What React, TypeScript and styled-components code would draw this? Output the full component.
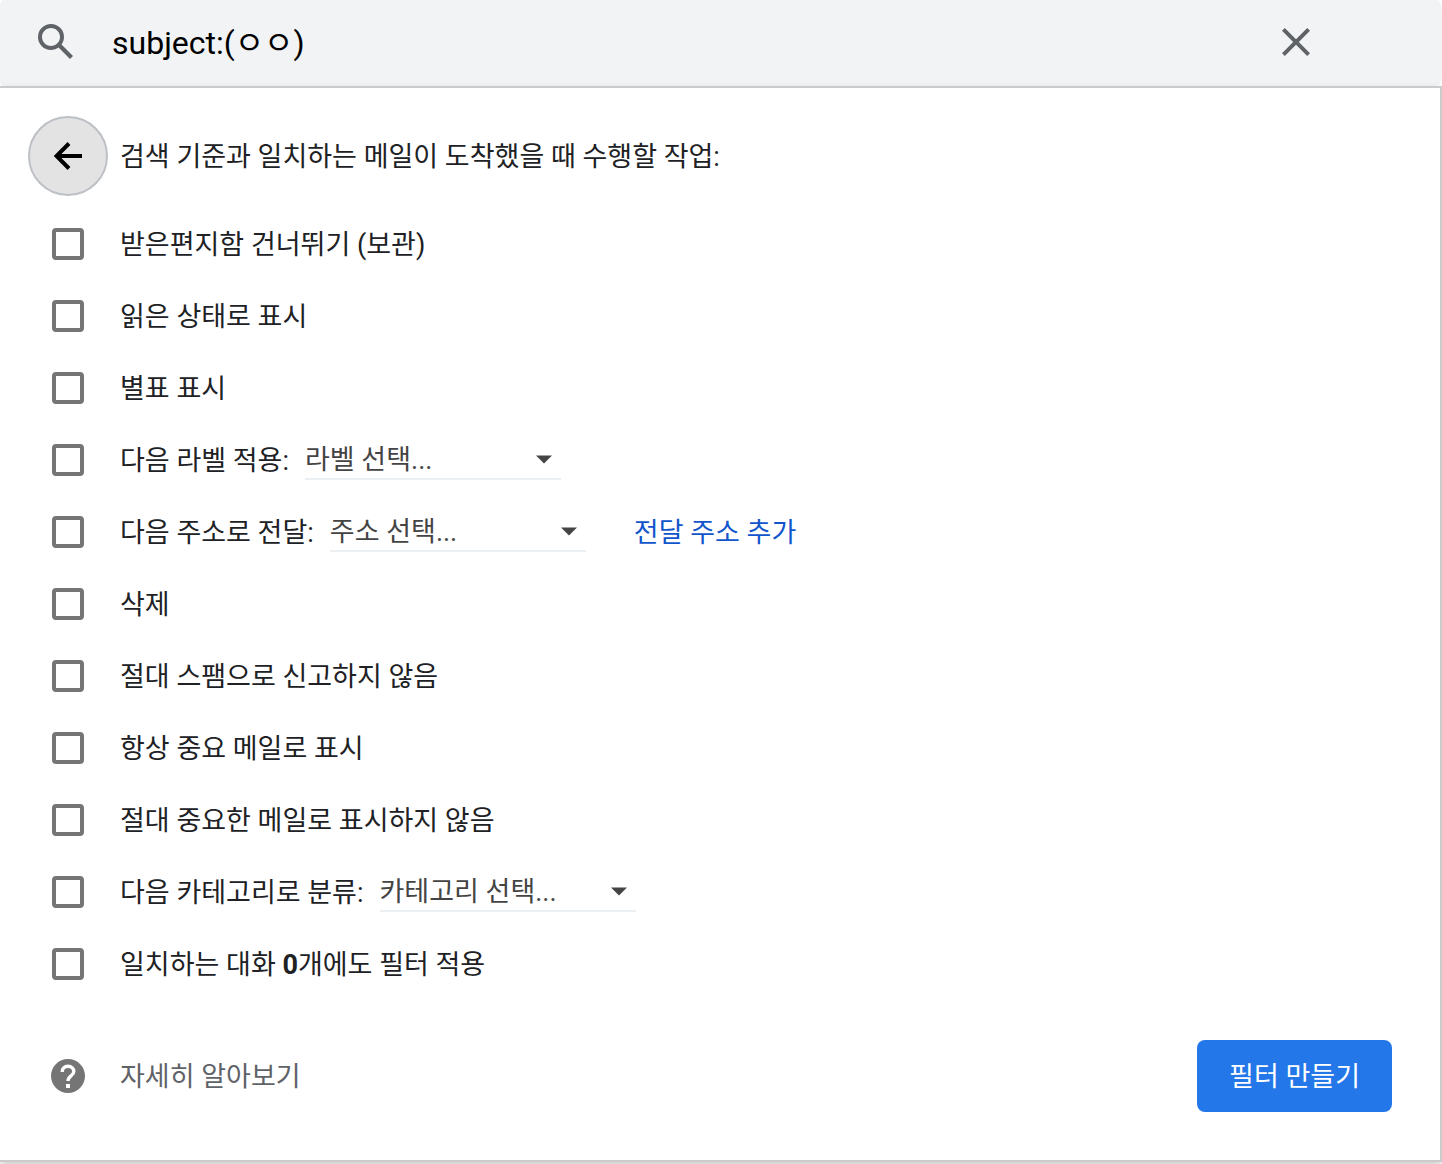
import React, { useState } from "react";
import styled, { createGlobalStyle } from "styled-components";

const GlobalStyle = createGlobalStyle`
  *, *::before, *::after { box-sizing: border-box; }
  body {
    margin: 0;
    background: #fff;
    color: #202124;
    font-family: Roboto, "Noto Sans CJK KR", sans-serif;
    font-size: 27px;
    line-height: 36px;
  }
  button, input, select { font: inherit; color: inherit; }
`;

const Page = styled.main`
  display: flex;
  flex-direction: column;
  min-height: 100vh;
  overflow: hidden;
`;

const SearchBar = styled.form`
  display: flex;
  align-items: center;
  height: 86px;
  padding: 0 122px 2px 32px;
  background: #f1f3f4;
  border-radius: 3px 5px 5px 3px / 6px 12px 12px 6px;
`;

const IconButton = styled.button`
  display: grid;
  place-items: center;
  flex: none;
  width: 48px;
  height: 48px;
  padding: 0;
  border: 0;
  background: none;
  color: #5f6368;
  cursor: pointer;
`;

const SearchInput = styled.input`
  flex: 1;
  min-width: 0;
  height: 48px;
  margin: 0 32px;
  padding: 0 0 4px;
  border: 0;
  outline: 0;
  background: none;
  color: #000;
  font-size: 32px;
`;

const Panel = styled.section`
  display: flex;
  flex: 1;
  flex-direction: column;
  padding: 28px 48px 48px 28px;
  margin-bottom: 2px;
  border: solid #cbcbcb;
  border-width: 2px 2px 2px 0;
  background: #fff;
  box-shadow: 0 4px 8px rgba(0, 0, 0, 0.2);
`;

const Heading = styled.header`
  display: flex;
  align-items: center;
  gap: 12px;
  margin-bottom: 12px;
`;

const Title = styled.h1`
  margin: 0;
  padding-top: 2px;
  font-size: inherit;
  font-weight: 400;
`;

const BackButton = styled.button`
  display: grid;
  place-items: center;
  width: 80px;
  height: 80px;
  padding: 0;
  border: 2px solid #bdc1c6;
  border-radius: 50%;
  background: #e3e3e3;
  color: #000;
  cursor: pointer;
`;

const Options = styled.ul`
  margin: 0;
  padding: 0 0 0 24px;
  list-style: none;
`;

const Option = styled.li`
  display: flex;
  align-items: center;
  height: 72px;
`;

const Label = styled.label`
  padding-top: 2px;
`;

const Checkbox = styled.input`
  appearance: none;
  flex: none;
  width: 32px;
  height: 32px;
  margin: 0 36px 0 0;
  border: 4px solid #757575;
  border-radius: 4px;
  cursor: pointer;

  &:checked { background: #757575; }
`;

const SelectBox = styled.span`
  position: relative;
  width: 256px;
  margin-left: 16px;

  svg {
    position: absolute;
    top: 15px;
    right: 9px;
    pointer-events: none;
  }
`;

const Select = styled.select`
  display: block;
  appearance: none;
  width: 100%;
  height: 40px;
  padding: 2px 0 0;
  border: 0;
  border-bottom: 2px solid #ebeff2;
  border-radius: 0;
  background: none;
  color: #444;
`;

const AddLink = styled.a`
  margin-left: 48px;
  padding-top: 2px;
  color: #1155cc;
  text-decoration: none;
`;

const Footer = styled.footer`
  display: flex;
  align-items: center;
  justify-content: space-between;
  margin-top: 40px;
`;

const HelpLink = styled.a`
  display: flex;
  align-items: center;
  gap: 34px;
  padding-left: 22px;
  color: #5f6368;
  text-decoration: none;

  span { padding-top: 2px; }
`;

const CreateButton = styled.button`
  height: 72px;
  padding: 2px 32px 0;
  border: 0;
  border-radius: 8px;
  background: #2377e8;
  color: #fff;
  cursor: pointer;
`;

type Row = {
  id: string;
  label: React.ReactNode;
  choice?: string;
  link?: string;
};

const rows: Row[] = [
  { id: "archive", label: "받은편지함 건너뛰기 (보관)" },
  { id: "read", label: "읽은 상태로 표시" },
  { id: "star", label: "별표 표시" },
  { id: "label", label: "다음 라벨 적용:", choice: "라벨 선택..." },
  { id: "forward", label: "다음 주소로 전달:", choice: "주소 선택...", link: "전달 주소 추가" },
  { id: "delete", label: "삭제" },
  { id: "nospam", label: "절대 스팸으로 신고하지 않음" },
  { id: "important", label: "항상 중요 메일로 표시" },
  { id: "unimportant", label: "절대 중요한 메일로 표시하지 않음" },
  { id: "category", label: "다음 카테고리로 분류:", choice: "카테고리 선택..." },
  { id: "apply", label: <>일치하는 대화 <b>0</b>개에도 필터 적용</> },
];

const SearchIcon = () => (
  <svg width="48" height="48" viewBox="0 0 24 24" fill="currentColor" aria-hidden="true">
    <path d="M20.49 19l-5.73-5.73C15.53 12.2 16 10.91 16 9.5A6.5 6.5 0 1 0 9.5 16c1.41 0 2.7-.47 3.77-1.24L19 20.49 20.49 19zM5 9.5C5 7.01 7.01 5 9.5 5S14 7.01 14 9.5 11.99 14 9.5 14 5 11.99 5 9.5z" />
  </svg>
);

const CloseIcon = () => (
  <svg width="48" height="48" viewBox="0 0 24 24" fill="currentColor" aria-hidden="true">
    <path d="M19 6.41L17.59 5 12 10.59 6.41 5 5 6.41 10.59 12 5 17.59 6.41 19 12 13.41 17.59 19 19 17.59 13.41 12z" />
  </svg>
);

const BackIcon = () => (
  <svg width="28" height="28" viewBox="0 0 28 28" fill="none" stroke="currentColor" strokeWidth="4" aria-hidden="true">
    <path d="M28 14H3M15 1.5L2.5 14L15 26.5" />
  </svg>
);

const CaretIcon = () => (
  <svg width="16" height="9" viewBox="0 0 16 9" fill="#444" aria-hidden="true">
    <path d="M0 0.5h16L8 8.5z" />
  </svg>
);

const HelpIcon = () => (
  <svg width="36" height="36" viewBox="0 0 36 36" aria-hidden="true">
    <circle cx="18" cy="18" r="17" fill="#757575" />
    <path d="M12.2 14c0-3.4 2.4-5.8 5.8-5.8s5.8 2.3 5.8 5.2c0 4.2-5.8 4.6-5.8 9.6" fill="none" stroke="#fff" strokeWidth="3.4" />
    <path d="M16 26h4v4h-4z" fill="#fff" />
  </svg>
);

export default function App() {
  const [query, setQuery] = useState("subject:(ㅇㅇ)");

  return (
    <Page>
      <GlobalStyle />
      <SearchBar role="search" onSubmit={(event) => event.preventDefault()}>
        <IconButton type="submit" aria-label="검색">
          <SearchIcon />
        </IconButton>
        <SearchInput
          aria-label="메일 검색"
          value={query}
          onChange={(event) => setQuery(event.target.value)}
        />
        <IconButton type="button" aria-label="검색어 지우기" onClick={() => setQuery("")}>
          <CloseIcon />
        </IconButton>
      </SearchBar>
      <Panel>
        <Heading>
          <BackButton type="button" aria-label="뒤로">
            <BackIcon />
          </BackButton>
          <Title>검색 기준과 일치하는 메일이 도착했을 때 수행할 작업:</Title>
        </Heading>
        <Options>
          {rows.map((row) => (
            <Option key={row.id}>
              <Checkbox type="checkbox" id={row.id} />
              <Label htmlFor={row.id}>{row.label}</Label>
              {row.choice && (
                <SelectBox>
                  <Select aria-label={row.choice}>
                    <option>{row.choice}</option>
                  </Select>
                  <CaretIcon />
                </SelectBox>
              )}
              {row.link && <AddLink href="#forwarding">{row.link}</AddLink>}
            </Option>
          ))}
        </Options>
        <Footer>
          <HelpLink href="#help">
            <HelpIcon />
            <span>자세히 알아보기</span>
          </HelpLink>
          <CreateButton type="button">필터 만들기</CreateButton>
        </Footer>
      </Panel>
    </Page>
  );
}
